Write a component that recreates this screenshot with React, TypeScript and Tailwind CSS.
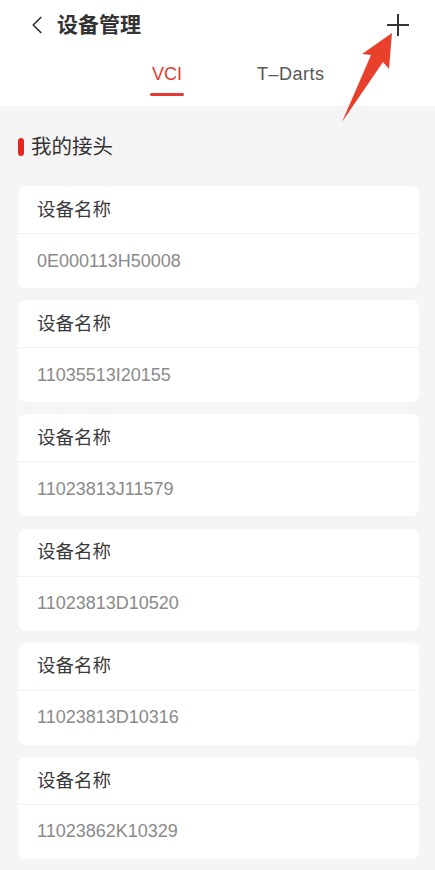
import { ChevronLeft } from 'lucide-react';

const devices = [
  '0E000113H50008',
  '11035513I20155',
  '11023813J11579',
  '11023813D10520',
  '11023813D10316',
  '11023862K10329',
];

const cjk = "font-['Liberation_Sans','Noto_Sans_CJK_SC',sans-serif]";

export default function App() {
  return (
    <div className={`relative w-[435px] h-[870px] overflow-hidden bg-[#f5f5f5] ${cjk}`}>
      {/* Header */}
      <div className="bg-white">
        <div className="flex h-[50px] items-center pl-[22px] pr-[26px]">
          <ChevronLeft className="text-[#333]" size={30} strokeWidth={1.4} />
          <span className="ml-[5px] text-[21px] font-bold text-[#333]">设备管理</span>
          <div className="ml-auto relative w-[22px] h-[22px]">
            <div className="absolute left-0 top-[10px] w-[22px] h-[2px] bg-[#333]" />
            <div className="absolute left-[10px] top-0 w-[2px] h-[22px] bg-[#333]" />
          </div>
        </div>
        <div className="flex h-[56px] pl-[150px]">
          <div className="flex flex-col items-center">
            <span className="mt-[12px] text-[18px] leading-[24px] text-[#e53935]">VCI</span>
            <div className="mt-[7px] w-[34px] h-[3px] rounded-full bg-[#e53935]" />
          </div>
          <span className="ml-[73px] mt-[12px] text-[18px] leading-[24px] tracking-[0.5px] text-[#555]">T–Darts</span>
        </div>
      </div>

      {/* Section title */}
      <div className="flex items-center h-[80px] pl-[18px] pt-[2px]">
        <div className="w-[6px] h-[18px] rounded-[3px] bg-[#e8251f]" />
        <span className="ml-[7px] text-[20.5px] text-[#333]">我的接头</span>
      </div>

      {/* Device list */}
      <div className="flex flex-col gap-[12.2px] pl-[18px] pr-[16px]">
        {devices.map((sn) => (
          <div key={sn} className="bg-white rounded-[8px]">
            <div className="flex items-center h-[47px] pl-[19px] text-[18.5px] text-[#3a3a3a]">设备名称</div>
            <div className="h-px bg-[#f0f0f0]" />
            <div className="flex items-center h-[54px] pl-[19px] text-[18px] text-[#8a8a8a]">{sn}</div>
          </div>
        ))}
      </div>

      {/* Annotation arrow */}
      <svg className="absolute left-0 top-0 pointer-events-none" width="435" height="140" viewBox="0 0 435 140">
        <polygon points="392,33 389,69 383,62 342,122 371,55 362,54" fill="#e9402b" />
      </svg>
    </div>
  );
}
